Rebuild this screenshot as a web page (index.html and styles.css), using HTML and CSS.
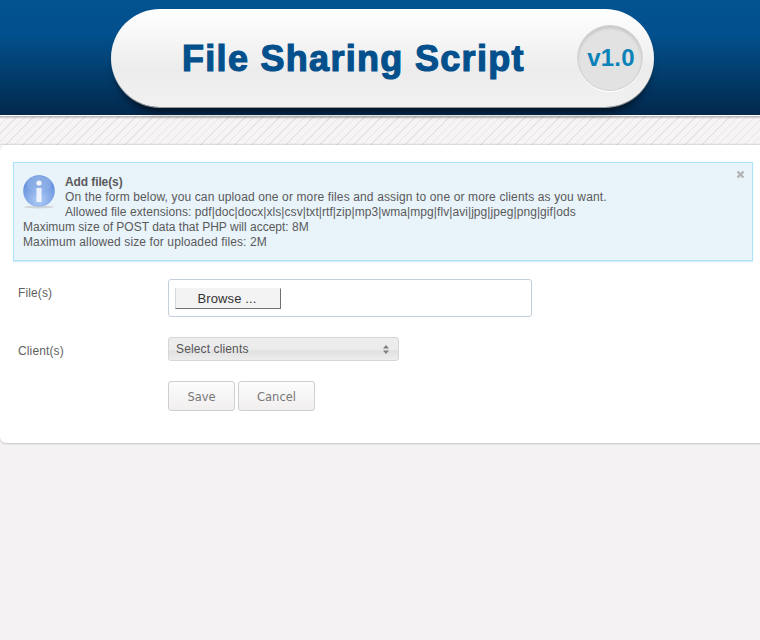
FILE: index.html
```html
<!DOCTYPE html>
<html lang="en">
<head>
<meta charset="utf-8">
<title>File Sharing Script</title>
<link rel="stylesheet" href="styles.css">
</head>
<body>
<header class="header">
  <div class="pill">
    <h1 class="title">File Sharing Script</h1>
    <div class="version">v1.0</div>
  </div>
</header>
<div class="stripes"></div>
<main class="card">
  <div class="alert">
    <svg class="alert-icon" width="32" height="34" viewBox="0 0 32 34" aria-hidden="true">
      <defs>
        <radialGradient id="ball" cx="50%" cy="78%" r="72%">
          <stop offset="0" stop-color="#b2cdf5"/>
          <stop offset="1" stop-color="#5c8bdb"/>
        </radialGradient>
        <linearGradient id="gloss" x1="0" y1="0" x2="0" y2="1">
          <stop offset="0" stop-color="#fff" stop-opacity=".3"/>
          <stop offset="1" stop-color="#fff" stop-opacity=".04"/>
        </linearGradient>
      </defs>
      <ellipse cx="16" cy="32" rx="15" ry="1.4" fill="#d2d6d9"/>
      <circle cx="16" cy="16" r="15.8" fill="url(#ball)"/>
      <ellipse cx="16" cy="9" rx="12.5" ry="8" fill="url(#gloss)"/>
      <circle cx="16" cy="8" r="2.6" fill="#f4f7fc"/>
      <rect x="13.5" y="13" width="5" height="14" fill="#eef3fb"/>
    </svg>
    <svg class="alert-close" width="9" height="9" viewBox="0 0 9 9" aria-hidden="true">
      <path d="M1.5 1.5l6 6M7.5 1.5l-6 6" stroke="#b4b4b4" stroke-width="2.4" fill="none"/>
    </svg>
    <strong class="alert-title">Add file(s)</strong><br>
    <span class="line-intro">On the form below, you can upload one or more files and assign to one or more clients as you want.</span><br>
    <span class="line-ext">Allowed file extensions: pdf|doc|docx|xls|csv|txt|rtf|zip|mp3|wma|mpg|flv|avi|jpg|jpeg|png|gif|ods</span><br>
    <span class="line-post">Maximum size of POST data that PHP will accept: 8M</span><br>
    <span class="line-size">Maximum allowed size for uploaded files: 2M</span>
  </div>
  <form class="form">
    <div class="row row-file">
      <label class="label">File(s)</label>
      <div class="file-box"><span class="browse">Browse ...</span></div>
    </div>
    <div class="row row-select">
      <label class="label">Client(s)</label>
      <div class="select">
        <span>Select clients</span>
        <svg width="6" height="9" viewBox="0 0 6 9" aria-hidden="true"><path d="M3 0l3 3.4H0zM3 9L0 5.6h6z" fill="#7d7d7d"/></svg>
      </div>
    </div>
    <div class="actions">
      <span class="btn btn-save">Save</span>
      <span class="btn btn-cancel">Cancel</span>
    </div>
  </form>
</main>
</body>
</html>
```
FILE: styles.css
```css
* { box-sizing: border-box; }
html, body { margin: 0; padding: 0; }
body {
  background: #f4f2f3;
  font-family: "Liberation Sans", Arial, sans-serif;
  font-size: 12px;
  letter-spacing: .13px;
  color: #5a5a5a;
  height: 640px;
  overflow: hidden;
}
.header {
  height: 116px;
  padding-top: 9px;
  display: flex;
  justify-content: center;
  background: linear-gradient(#035391 0, #02508d 30%, #023a68 70%, #03284d 100%);
  border-bottom: 1px solid #fff;
}
.pill {
  width: 543px;
  height: 98px;
  margin-left: 5px;
  border-radius: 49px;
  background: linear-gradient(#fff 0, #f0f0f0 50%, #ececec 62%, #f1f1f1 100%);
  box-shadow: 0 1px 0 #9a9a9a, 0 9px 9px -5px rgba(0, 0, 0, .7);
  display: flex;
  align-items: center;
  padding-left: 71px;
}
.title {
  margin: 2px 0 0;
  width: 395px;
  font-size: 36px;
  line-height: 1;
  font-weight: 700;
  color: #03508c;
  -webkit-text-stroke: 1.2px #03508c;
  letter-spacing: 1.3px;
  white-space: nowrap;
}
.version {
  width: 66px;
  height: 66px;
  padding-left: 2px;
  border-radius: 50%;
  background: #e2e2e2;
  border: 1px solid #d2d2d2;
  box-shadow: inset 0 2px 3px rgba(0, 0, 0, .14), 0 1px 0 #fff;
  display: flex;
  align-items: center;
  justify-content: center;
  color: #0a82b8;
  font-size: 24px;
  letter-spacing: .2px;
  font-weight: 700;
}
.stripes {
  height: 29px;
  background-color: #f5f3f4;
  background-image:
    linear-gradient(rgba(0, 0, 0, .28), rgba(0, 0, 0, 0) 3px),
    linear-gradient(0deg, rgba(0, 0, 0, .12), rgba(0, 0, 0, 0) 2px),
    repeating-linear-gradient(-45deg, #f6f4f5 0, #f6f4f5 5px, #e6e4e4 5px, #e6e4e4 6px);
}
.card {
  height: 298px;
  background: #fff;
  border-top-left-radius: 6px;
  border-bottom-left-radius: 6px;
  box-shadow: 0 1px 2px rgba(0, 0, 0, .2);
  padding: 17px 7px 0 13px;
}
.alert {
  position: relative;
  height: 99px;
  padding: 12px 10px 0 9px;
  line-height: 15px;
  background: #e8f3fa;
  border: 1px solid #a9e4f8;
  box-shadow: 0 1px 1px rgba(120, 210, 240, .35);
}
.alert-icon { float: left; margin: 0 10px 0 0; }
.alert-close { position: absolute; top: 7px; right: 7px; }
.alert-title { font-weight: 700; letter-spacing: -.1px; }
.line-intro { letter-spacing: .13px; }
.line-ext { letter-spacing: .07px; }
.line-post { letter-spacing: 0; }
.line-size { letter-spacing: .12px; }
.form { padding: 18px 0 0 5px; }
.row { display: flex; }
.label { width: 150px; flex: none; color: #5f5f5f; }
.row-file { height: 58px; }
.row-file .label { padding-top: 7px; }
.file-box {
  width: 364px;
  height: 38px;
  background: #fff;
  border: 1px solid #c5d0da;
  border-radius: 3px;
  padding: 8px 0 0 6px;
}
.browse {
  display: block;
  width: 106px;
  height: 21px;
  padding-right: 2px;
  background: #f3f3f3;
  border: 1px solid #d8d8d8;
  border-top-color: #f3f3f3;
  border-right-color: #707070;
  border-bottom-color: #707070;
  color: #333;
  text-align: center;
  font-size: 13px;
  letter-spacing: .1px;
  line-height: 19px;
}
.row-select { height: 44px; }
.row-select .label { padding-top: 7px; }
.select {
  width: 231px;
  height: 24px;
  padding: 0 9px 0 7px;
  display: flex;
  align-items: center;
  justify-content: space-between;
  border: 1px solid #d6d6d6;
  border-radius: 3px;
  background: linear-gradient(#ededed 0, #ececec 50%, #e1e1e1 60%, #ededed 100%);
  color: #555;
}
.actions { display: flex; gap: 3px; padding-left: 150px; }
.btn {
  height: 30px;
  padding-top: 1px;
  display: flex;
  align-items: center;
  justify-content: center;
  border: 1px solid #cfcfd2;
  border-radius: 3px;
  background: linear-gradient(#fdfdfd, #f1eeee);
  color: #777;
  font-family: "DejaVu Sans", sans-serif;
  font-size: 11.5px;
  letter-spacing: 0;
}
.btn-save { width: 67px; }
.btn-cancel { width: 77px; }
```
